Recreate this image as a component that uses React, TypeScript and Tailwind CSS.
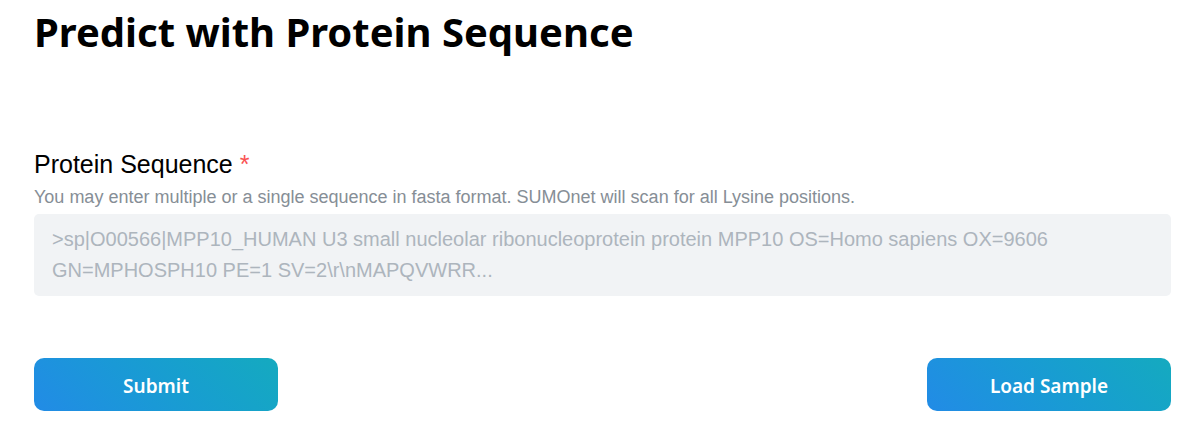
import { useState } from "react";

const SAMPLE =
  ">sp|O00566|MPP10_HUMAN U3 small nucleolar ribonucleoprotein protein MPP10 OS=Homo sapiens OX=9606 GN=MPHOSPH10 PE=1 SV=2\\r\\nMAPQVWRR...";

const buttonClass =
  "h-[53px] w-[244px] rounded-[10px] bg-linear-45 from-[#228be6] to-[#15aabf] pt-1 font-['Noto_Sans',sans-serif] text-[19px] font-semibold text-white";

export default function App() {
  const [sequence, setSequence] = useState("");

  return (
    <main className="bg-white pt-1 pr-[22px] pb-8 pl-[34px] font-['Liberation_Sans',Arial,sans-serif] text-black">
      <h1 className="font-['Noto_Sans',sans-serif] text-[40px] leading-14 font-bold">
        Predict with Protein Sequence
      </h1>
      <form className="mt-[86px]" onSubmit={(event) => event.preventDefault()}>
        <label htmlFor="sequence" className="block text-[25px] leading-9">
          Protein Sequence <span className="text-[#fa5252]">*</span>
        </label>
        <p id="sequence-help" className="text-[18px] leading-[30px] text-[#868e96]">
          You may enter multiple or a single sequence in fasta format. SUMOnet will scan for all Lysine positions.
        </p>
        <textarea
          id="sequence"
          required
          rows={2}
          aria-describedby="sequence-help"
          value={sequence}
          onChange={(event) => setSequence(event.target.value)}
          placeholder={SAMPLE}
          className="mt-0.5 block w-full resize-none rounded-[5px] bg-[#f1f3f5] px-[18px] py-[10px] text-[20px] leading-[31px] outline-none placeholder:text-[#adb5bd]"
        />
        <div className="mt-[62px] flex justify-between">
          <button type="submit" className={buttonClass}>Submit</button>
          <button type="button" className={buttonClass} onClick={() => setSequence(SAMPLE)}>Load Sample</button>
        </div>
      </form>
    </main>
  );
}
